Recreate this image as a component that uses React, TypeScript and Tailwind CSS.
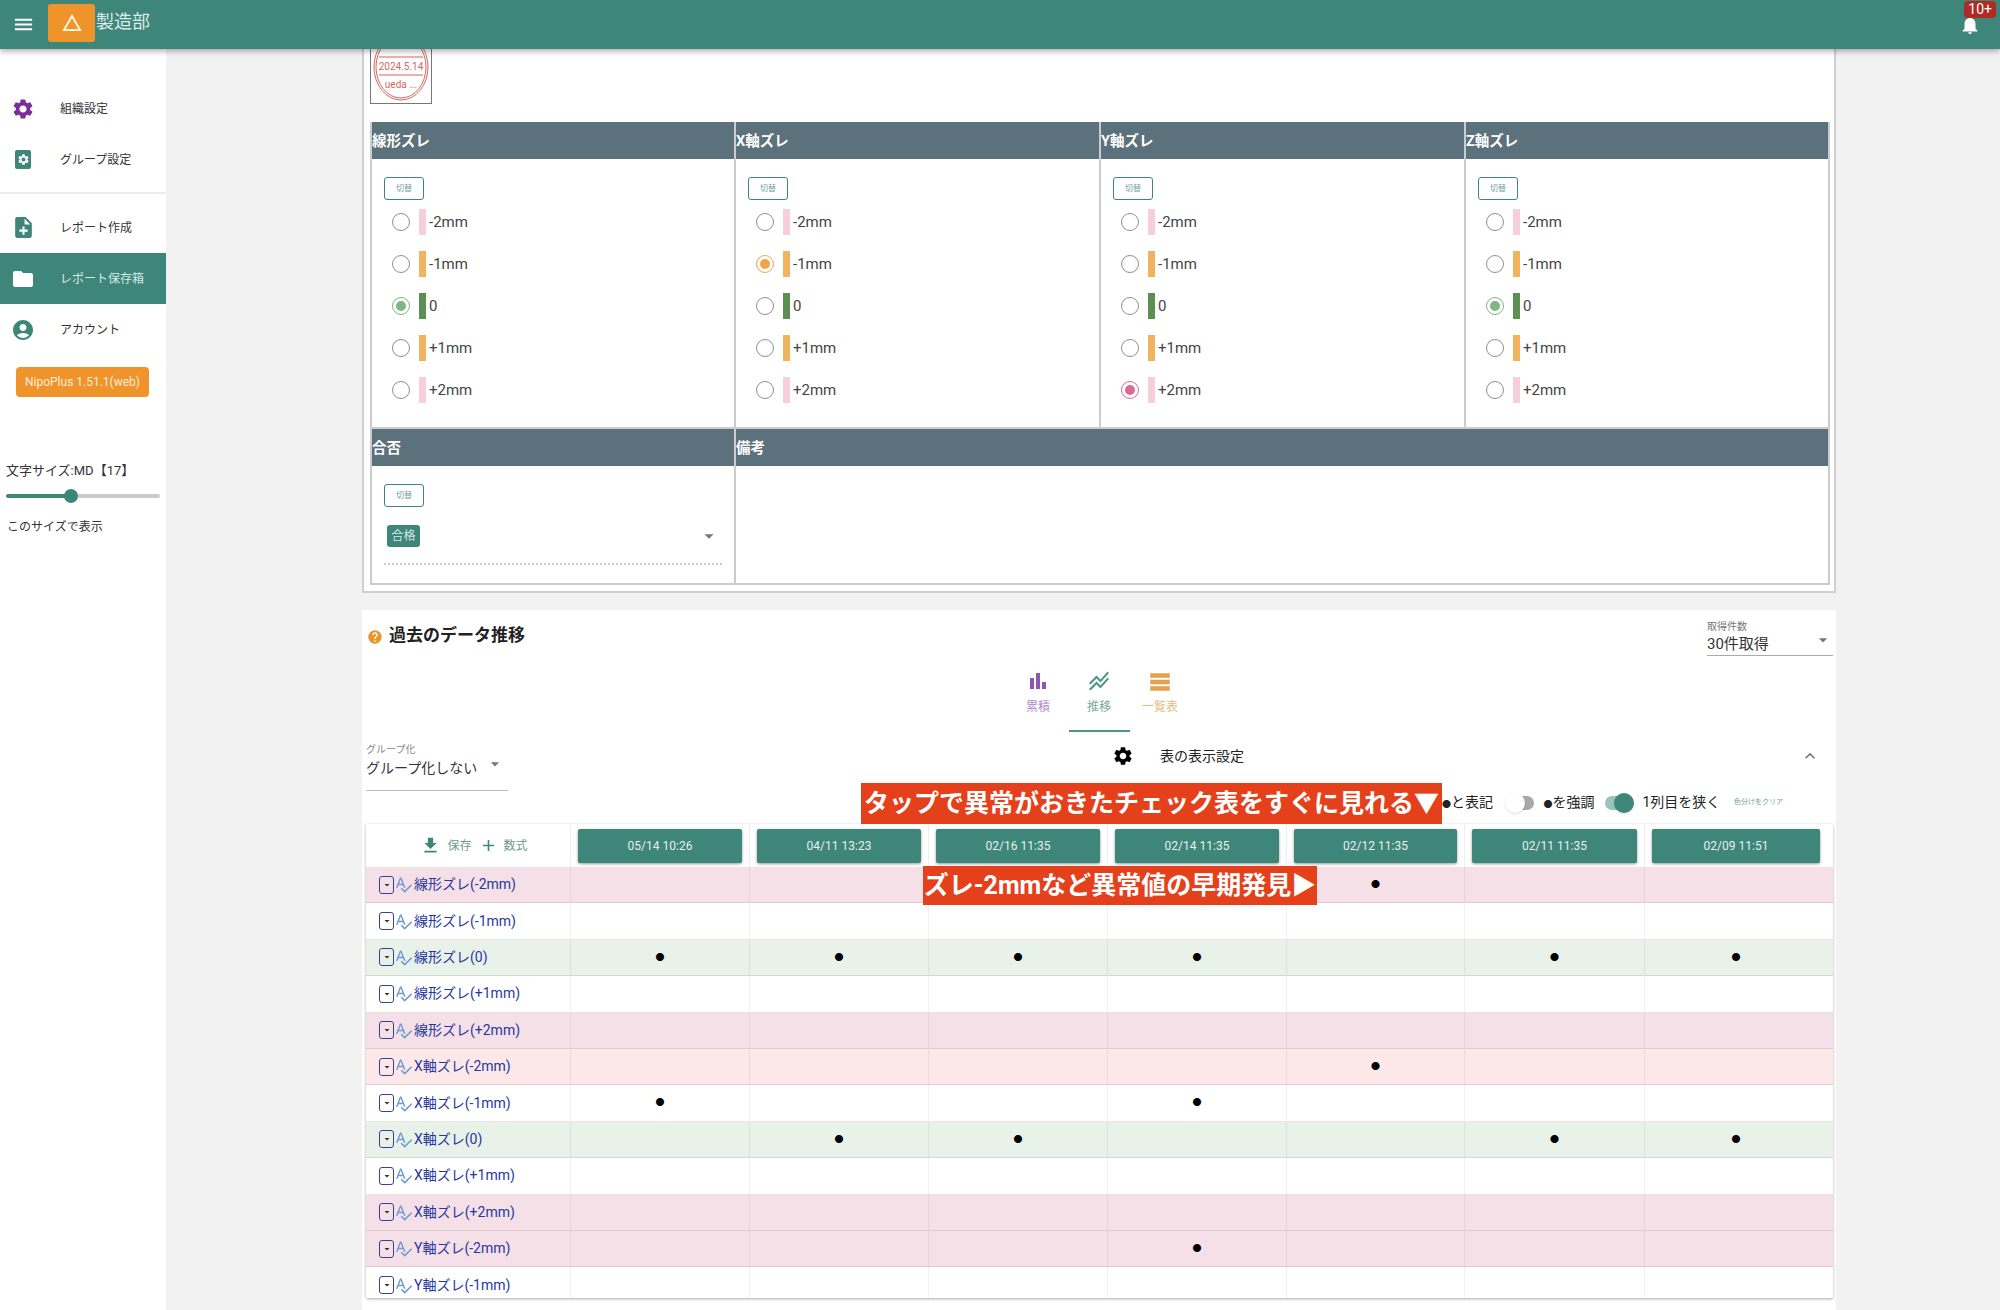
import {
  MdAccountCircle,
  MdAdd,
  MdArrowDropDown,
  MdBarChart,
  MdExpandLess,
  MdFileDownload,
  MdFolder,
  MdHelp,
  MdMenu,
  MdNoteAdd,
  MdNotifications,
  MdSettings,
  MdSpellcheck,
  MdStackedLineChart,
  MdTableRows,
} from "react-icons/md";

const levels = [
  { label: "-2mm", bar: "bg-[#f6cfdb]" },
  { label: "-1mm", bar: "bg-[#f2b35f]" },
  { label: "0", bar: "bg-[#5d8f55]" },
  { label: "+1mm", bar: "bg-[#f2b35f]" },
  { label: "+2mm", bar: "bg-[#f6cfdb]" },
];

const checks = [
  { title: "線形ズレ", picked: 2, border: "border-[#7cb87f]", dot: "bg-[#7cb87f]" },
  { title: "X軸ズレ", picked: 1, border: "border-[#f0a54a]", dot: "bg-[#f0a54a]" },
  { title: "Y軸ズレ", picked: 4, border: "border-[#d96a95]", dot: "bg-[#d96a95]" },
  { title: "Z軸ズレ", picked: 2, border: "border-[#7cb87f]", dot: "bg-[#7cb87f]" },
];

const dates = ["05/14 10:26", "04/11 13:23", "02/16 11:35", "02/14 11:35", "02/12 11:35", "02/11 11:35", "02/09 11:51"];

const pink = "bg-[#f6e0e8]";
const rose = "bg-[#fce8e9]";
const green = "bg-[#e8f2e9]";
const white = "bg-white";

const rows = [
  { name: "線形ズレ(-2mm)", bg: pink, dots: [4] },
  { name: "線形ズレ(-1mm)", bg: white, dots: [] },
  { name: "線形ズレ(0)", bg: green, dots: [0, 1, 2, 3, 5, 6] },
  { name: "線形ズレ(+1mm)", bg: white, dots: [] },
  { name: "線形ズレ(+2mm)", bg: pink, dots: [] },
  { name: "X軸ズレ(-2mm)", bg: rose, dots: [4] },
  { name: "X軸ズレ(-1mm)", bg: white, dots: [0, 3] },
  { name: "X軸ズレ(0)", bg: green, dots: [1, 2, 5, 6] },
  { name: "X軸ズレ(+1mm)", bg: white, dots: [] },
  { name: "X軸ズレ(+2mm)", bg: pink, dots: [] },
  { name: "Y軸ズレ(-2mm)", bg: pink, dots: [3] },
  { name: "Y軸ズレ(-1mm)", bg: white, dots: [] },
];

function NavItem({ icon, label, active }: { icon: React.ReactNode; label: string; active?: boolean }) {
  return (
    <div className={`flex h-[51px] items-center ${active ? "bg-[#3d8679] text-[#d5e8e3]" : "text-[#333]"}`}>
      <div className="flex w-[46px] justify-center">{icon}</div>
      <span className="ml-[14px] text-[12px]">{label}</span>
    </div>
  );
}

function SwitchButton() {
  return (
    <div className="flex h-[23px] w-[40px] items-center justify-center rounded-[3px] border border-[#3d8679] text-[8px] text-[#6fa498]">
      切替
    </div>
  );
}

function CheckColumn({ title, picked, border, dot }: (typeof checks)[number]) {
  return (
    <div className="border-r-2 border-[#ccc] last:border-r-0">
      <div className="flex h-[37px] items-center bg-[#5b717b] pt-[2px] text-[14.5px] font-bold text-white">{title}</div>
      <div className="h-[268px] pl-[12px] pt-[18px]">
        <SwitchButton />
        <div className="mt-[1px]">
          {levels.map((level, i) => (
            <div key={level.label} className="flex h-[42px] items-center">
              <div
                className={`ml-[8px] flex h-[18px] w-[18px] items-center justify-center rounded-full border-[1.5px] ${
                  i === picked ? border : "border-[#8f8f8f]"
                }`}
              >
                {i === picked && <div className={`h-[10px] w-[10px] rounded-full ${dot}`} />}
              </div>
              <div className={`ml-[9px] h-[26px] w-[7px] ${level.bar}`} />
              <span className="ml-[3px] text-[15px] text-[#444]">{level.label}</span>
            </div>
          ))}
        </div>
      </div>
    </div>
  );
}

function Toggle({ on }: { on?: boolean }) {
  return (
    <div className="relative h-[14px] w-[28px] rounded-full">
      <div className={`h-full w-full rounded-full ${on ? "bg-[#9cc3bb]" : "bg-[#a8a8a8]"}`} />
      <div
        className={`absolute top-[-3px] h-[20px] w-[20px] rounded-full shadow ${
          on ? "right-[-1px] bg-[#3d8679]" : "left-[-1px] bg-white"
        }`}
      />
    </div>
  );
}

export default function App() {
  return (
    <div className="relative h-[1310px] w-[2000px] overflow-hidden bg-[#f2f2f2] font-[Roboto,'Noto_Sans_CJK_JP',sans-serif]">
      <header className="relative z-10 flex h-[49px] items-center bg-[#3d8679] shadow-[0_2px_6px_rgba(0,0,0,0.35)]">
        <MdMenu className="ml-[12px] text-white" size={23} />
        <div className="mb-[3px] ml-[13px] flex h-[38px] w-[47px] items-center justify-center rounded-[3px] bg-[#ef932b]">
          <svg width="20" height="20" viewBox="0 0 20 20" fill="none" stroke="#fff3dc" strokeWidth="2">
            <path d="M10 3 L18 17 H2 Z" />
          </svg>
        </div>
        <span className="mb-[7px] ml-[1px] text-[18px] text-[#dcebe7]">製造部</span>
        <div className="relative ml-auto mr-[19px]">
          <MdNotifications className="text-white" size={22} />
          <span className="absolute right-[-15px] top-[-13px] rounded-[4px] bg-[#b02a24] px-[4px] text-[14px] leading-[17px] text-white">
            10+
          </span>
        </div>
      </header>

      <div className="flex h-[1261px]">
        <aside className="h-full w-[166px] shrink-0 bg-white">
          <div className="pt-[34px]">
            <NavItem icon={<MdSettings className="text-[#7b2d9c]" size={24} />} label="組織設定" />
            <NavItem
              icon={
                <div className="flex h-[19px] w-[16px] items-center justify-center rounded-[2px] bg-[#3d8679]">
                  <MdSettings className="text-white" size={13} />
                </div>
              }
              label="グループ設定"
            />
          </div>
          <div className="mb-[8px] mt-[7px] h-[2px] bg-[#ececec]" />
          <NavItem icon={<MdNoteAdd className="text-[#3d8679]" size={25} />} label="レポート作成" />
          <NavItem icon={<MdFolder className="text-white" size={24} />} label="レポート保存箱" active />
          <NavItem icon={<MdAccountCircle className="text-[#3d8679]" size={24} />} label="アカウント" />
          <div className="ml-[16px] mt-[12px] flex h-[30px] w-[133px] items-center justify-center rounded-[4px] bg-[#ef932b] text-[12px] text-[#fdeed9]">
            NipoPlus 1.51.1(web)
          </div>
          <div className="ml-[6px] mt-[64px] text-[13px] text-[#333]">文字サイズ:MD【17】</div>
          <div className="relative ml-[6px] mt-[13px] flex h-[4px] w-[154px] rounded-full bg-[#ccc]">
            <div className="h-full w-[64px] rounded-full bg-[#3d8679]" />
            <div className="absolute left-[58px] top-[-5px] h-[14px] w-[14px] rounded-full bg-[#3d8679]" />
          </div>
          <div className="ml-[7px] mt-[20px] text-[12px] text-[#333]">このサイズで表示</div>
        </aside>

        <main className="w-[1670px] pl-[196px]">
          <section className="h-[544px] w-[1474px] border-x-2 border-b-2 border-[#d0d0d0] bg-white pl-[6px] pt-0">
            <div className="h-[55px] w-[62px] overflow-hidden border border-t-0 border-[#777]">
              <svg width="60" height="54" viewBox="0 0 60 54">
                <ellipse cx="30" cy="18" rx="27" ry="33" fill="none" stroke="#d9655e" strokeWidth="1" />
                <ellipse cx="30" cy="18" rx="25" ry="31" fill="none" stroke="#d9655e" strokeWidth="1" />
                <line x1="8" y1="8" x2="52" y2="8" stroke="#d9655e" strokeWidth="1" />
                <line x1="8" y1="26" x2="52" y2="26" stroke="#d9655e" strokeWidth="1" />
                <text x="30" y="21" textAnchor="middle" fontSize="10" fill="#d9655e">2024.5.14</text>
                <text x="30" y="39" textAnchor="middle" fontSize="10" fill="#d9655e">ueda ...</text>
              </svg>
            </div>
            <div className="mt-[18px] w-[1460px] border-x-2 border-b-2 border-[#ccc]">
              <div className="grid grid-cols-[364px_365px_365px_1fr] border-b-2 border-[#ccc]">
                {checks.map((c) => (
                  <CheckColumn key={c.title} {...c} />
                ))}
              </div>
              <div className="grid grid-cols-[364px_1fr]">
                <div className="border-r-2 border-[#ccc]">
                  <div className="flex h-[37px] items-center bg-[#5b717b] pt-[2px] text-[14.5px] font-bold text-white">合否</div>
                  <div className="h-[117px] px-[12px] pt-[18px]">
                    <SwitchButton />
                    <div className="mt-[18px] flex h-[40px] items-start justify-between border-b-2 border-dotted border-[#ccc]">
                      <span className="ml-[3px] flex h-[22px] w-[33px] items-center justify-center rounded-[3px] bg-[#3d8679] text-[12px] text-[#d5e8e3]">
                        合格
                      </span>
                      <MdArrowDropDown className="mr-[2px] text-[#777]" size={22} />
                    </div>
                  </div>
                </div>
                <div>
                  <div className="flex h-[37px] items-center bg-[#5b717b] pt-[2px] text-[14.5px] font-bold text-white">備考</div>
                </div>
              </div>
            </div>
          </section>

          <section className="relative mt-[17px] h-[700px] w-[1474px] bg-white px-[4px]">
            <div className="flex h-[50px] items-start justify-between">
              <div className="ml-[1px] mt-[13px] flex items-center gap-[6px]">
                <MdHelp className="mt-[3px] text-[#e8962f]" size={16} />
                <span className="text-[17px] font-bold text-[#222]">過去のデータ推移</span>
              </div>
              <div className="mr-[-1px] mt-[11px] h-[35px] w-[126px] border-b border-[#aaa]">
                <div className="text-[10px] leading-[11px] text-[#777]">取得件数</div>
                <div className="mt-[-2px] flex items-center justify-between text-[15px] leading-[16px] text-[#333]">
                  30件取得
                  <MdArrowDropDown className="mb-[8px] text-[#777]" size={20} />
                </div>
              </div>
            </div>

            <div className="mt-[10px] flex justify-center">
              <div className="flex h-[62px] w-[61px] flex-col items-center text-[12px] text-[#b08cc9]">
                <MdBarChart className="mt-[-1px] text-[#8f55b0]" size={24} />
                <span className="mt-[5px]">累積</span>
              </div>
              <div className="flex h-[62px] w-[61px] flex-col items-center border-b-2 border-[#4f9587] text-[12px] text-[#79a99d]">
                <MdStackedLineChart className="mt-[-1px] text-[#4f9587]" size={24} />
                <span className="mt-[5px]">推移</span>
              </div>
              <div className="flex h-[62px] w-[61px] flex-col items-center text-[12px] text-[#e8b87e]">
                <MdTableRows className="mt-[-1px] text-[#e5a04d]" size={26} />
                <span className="mt-[3px]">一覧表</span>
              </div>
            </div>

            <div className="flex h-[92px]">
              <div className="mt-[12px] h-[47px] w-[142px] border-b border-[#bbb]">
                <div className="text-[10px] leading-[11px] text-[#888]">グループ化</div>
                <div className="mt-[2px] flex items-start whitespace-nowrap text-[14px] leading-[22px] text-[#333]">
                  グループ化しない
                  <MdArrowDropDown className="ml-[8px] mt-[-3px] text-[#777]" size={20} />
                </div>
              </div>
              <div className="flex flex-1 flex-col">
                <div className="flex h-[48px] items-center pl-[604px] pr-[12px]">
                  <MdSettings className="text-black" size={22} />
                  <span className="ml-[26px] text-[14px] text-[#222]">表の表示設定</span>
                  <MdExpandLess className="ml-auto text-[#777]" size={20} />
                </div>
                <div className="mt-[12px] flex items-center pl-[934px] text-[14px] text-[#222]">
                  <span className="w-[58.5px] whitespace-nowrap"><span className="text-[9px]">●</span>と表記</span>
                  <div className="ml-[5px]"><Toggle /></div>
                  <span className="ml-[10px] w-[61px] whitespace-nowrap"><span className="text-[9px]">●</span>を強調</span>
                  <Toggle on />
                  <span className="ml-[10px] w-[80px] whitespace-nowrap">1列目を狭く</span>
                  <span className="ml-[11.5px] whitespace-nowrap text-[7px] text-[#6fa498]">色分けをクリア</span>
                </div>
              </div>
            </div>

            <div className="h-[474px] w-[1467px] overflow-hidden rounded-b-[2px] shadow-[0_1px_3px_rgba(0,0,0,0.35)]">
              <div className="grid h-[43px] grid-cols-[205px_179px_179px_179px_179px_178px_180px_188px]">
                <div className="flex items-center justify-center border-r border-[#eee] pl-[12px] text-[12px] text-[#6f9a90]">
                  <MdFileDownload className="text-[#3d8679]" size={21} />
                  <span className="ml-[6px]">保存</span>
                  <MdAdd className="ml-[7px] text-[#3d8679]" size={19} />
                  <span className="ml-[6px]">数式</span>
                </div>
                {dates.map((d) => (
                  <div key={d} className="flex items-center border-r border-[#eee] px-[7px] last:border-r-0 last:pr-[13px]">
                    <div className="flex h-[34px] w-full items-center justify-center rounded-[2px] bg-[#3d8679] text-[12px] text-[#e6f1ee] shadow-[0_1px_3px_rgba(0,0,0,0.4)]">
                      {d}
                    </div>
                  </div>
                ))}
              </div>
              {rows.map((row) => (
                <div
                  key={row.name}
                  className={`grid h-[36.4px] grid-cols-[205px_179px_179px_179px_179px_178px_180px_188px] border-b border-[#0000001a] last:border-b-0 ${row.bg}`}
                >
                  <div className="flex items-center border-r border-[#0000000f] pl-[13px] text-[14px] text-[#27379f]">
                    <div className="flex h-[18px] w-[15px] items-center justify-center rounded-[3px] border border-[#3a3f9e]">
                      <MdArrowDropDown className="text-[#333]" size={12} />
                    </div>
                    <MdSpellcheck className="text-[#6c9bd2]" size={19} />
                    <span className="ml-[1px] whitespace-nowrap">{row.name}</span>
                  </div>
                  {dates.map((d, i) => (
                    <div key={d} className="flex items-center justify-center border-r border-[#0000000f] text-[9px] text-black last:border-r-0 last:pr-[6px]">
                      {row.dots.includes(i) ? "●" : ""}
                    </div>
                  ))}
                </div>
              ))}
            </div>

            <div className="absolute left-[499px] top-[173px] flex h-[41px] w-[581px] items-center justify-center whitespace-nowrap bg-[#e5401c] text-[25px] font-bold text-white">
              タップで異常がおきたチェック表をすぐに見れる▼
            </div>
            <div className="absolute left-[561px] top-[256px] flex h-[39px] w-[394px] items-center justify-center whitespace-nowrap bg-[#e5401c] text-[25px] font-bold text-white">
              ズレ-2mmなど異常値の早期発見▶
            </div>
          </section>
        </main>
      </div>
    </div>
  );
}
